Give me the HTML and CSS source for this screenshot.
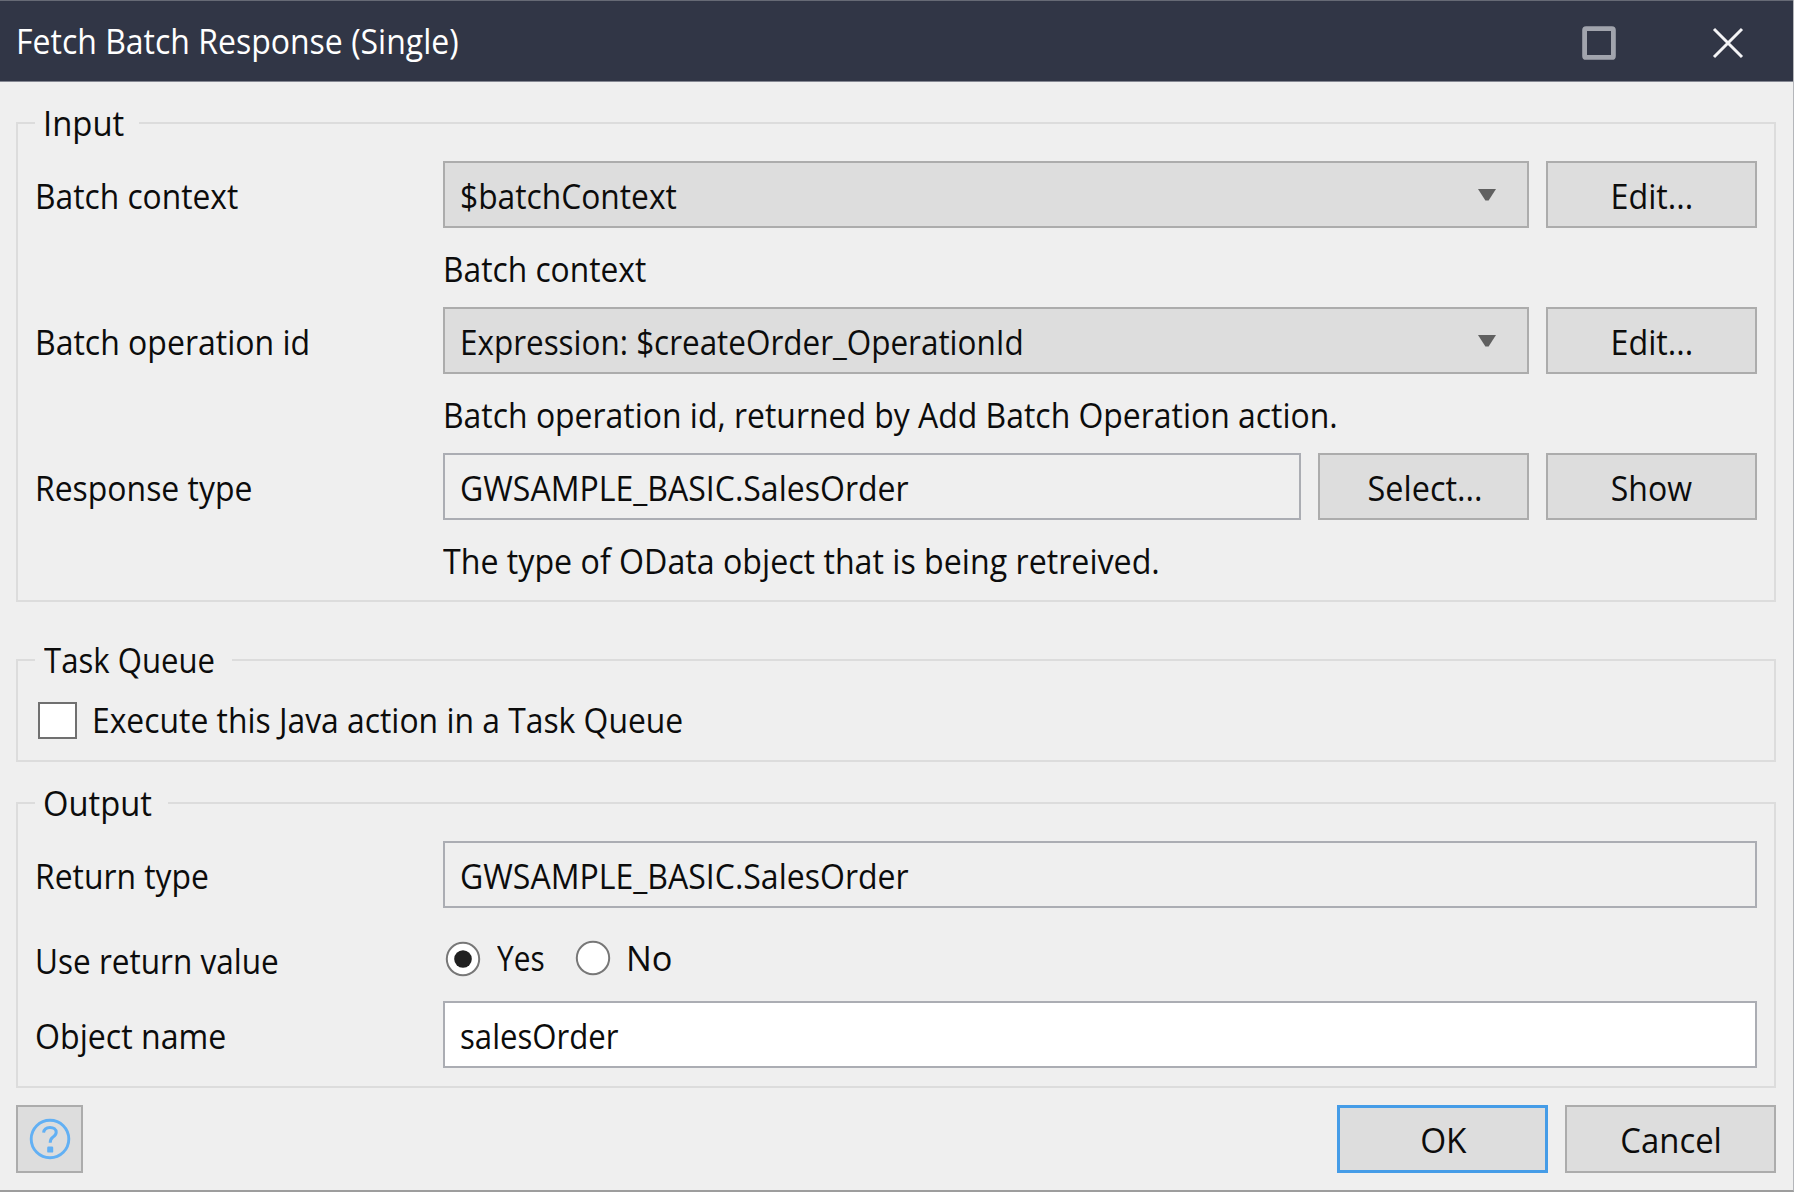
FILE: index.html
```html
<!DOCTYPE html>
<html lang="en">
<head>
<meta charset="utf-8">
<title>Fetch Batch Response (Single)</title>
<link rel="stylesheet" href="styles.css">
</head>
<body>
<div class="dialog">
  <header class="titlebar">
    <h1 class="t t-title">Fetch Batch Response (Single)</h1>
    <svg class="win-max" width="34" height="34" viewBox="0 0 34 34"><rect x="2.6" y="2.6" width="28.8" height="28.8" rx="1.5" fill="none" stroke="#a1a4ad" stroke-width="4.8"/></svg>
    <svg class="win-close" width="32" height="32" viewBox="0 0 32 32"><path d="M2 2 30 30M30 2 2 30" stroke="#f4f4f6" stroke-width="3" fill="none"/></svg>
  </header>

  <main class="content">
    <section class="group">
      <div class="legend legend-input"><span class="t t-input">Input</span></div>
      <div class="rows">
        <label class="label"><span class="t t-ctx">Batch context</span></label>
        <div class="controls">
          <div class="combo"><span class="t t-ctxval">$batchContext</span><svg class="arrow" width="18" height="12" viewBox="0 0 18 12"><path d="M0 0H18L10.6 11.5H7.4Z" fill="#606060"/></svg></div>
          <button class="btn"><span class="t t-edit">Edit...</span></button>
        </div>
        <p class="hint"><span class="t t-ctx">Batch context</span></p>

        <label class="label"><span class="t t-opid">Batch operation id</span></label>
        <div class="controls">
          <div class="combo"><span class="t t-expr">Expression: $createOrder_OperationId</span><svg class="arrow" width="18" height="12" viewBox="0 0 18 12"><path d="M0 0H18L10.6 11.5H7.4Z" fill="#606060"/></svg></div>
          <button class="btn"><span class="t t-edit">Edit...</span></button>
        </div>
        <p class="hint"><span class="t t-ophint">Batch operation id, returned by Add Batch Operation action.</span></p>

        <label class="label"><span class="t t-resp">Response type</span></label>
        <div class="controls">
          <div class="field"><span class="t t-gw">GWSAMPLE_BASIC.SalesOrder</span></div>
          <button class="btn btn-select"><span class="t t-select">Select...</span></button>
          <button class="btn"><span class="t">Show</span></button>
        </div>
        <p class="hint hint-type"><span class="t t-type">The type of OData object that is being retreived.</span></p>
      </div>
    </section>

    <section class="group group-queue">
      <div class="legend legend-queue"><span class="t t-queue">Task Queue</span></div>
      <label class="check-row"><i class="checkbox"></i><span class="t t-exec">Execute this Java action in a Task Queue</span></label>
    </section>

    <section class="group group-output">
      <div class="legend legend-output"><span class="t t-output">Output</span></div>
      <div class="rows">
        <label class="label"><span class="t t-ret">Return type</span></label>
        <div class="controls"><div class="field"><span class="t t-gw">GWSAMPLE_BASIC.SalesOrder</span></div></div>
        <label class="label label-use"><span class="t t-use">Use return value</span></label>
        <div class="radios">
          <label class="radio radio-yes"><svg width="36" height="36" viewBox="0 0 36 36"><circle cx="18" cy="18" r="16.2" fill="#fff" stroke="#777" stroke-width="2"/><circle cx="18" cy="18" r="8.8" fill="#202020"/></svg><span class="t t-yes">Yes</span></label>
          <label class="radio"><svg width="36" height="36" viewBox="0 0 36 36"><circle cx="18" cy="18" r="16.2" fill="#fff" stroke="#777" stroke-width="2"/></svg><span class="t t-no">No</span></label>
        </div>
        <label class="label"><span class="t t-obj">Object name</span></label>
        <div class="controls"><div class="field field-edit"><span class="t t-sales">salesOrder</span></div></div>
      </div>
    </section>
  </main>

  <footer class="footer">
    <button class="btn help"><svg width="42" height="42" viewBox="0 0 42 42" fill="none" stroke="#62b0f4"><circle cx="21" cy="21" r="18.8" stroke-width="2.9"/><path d="M14.6 14.6C15 11.2 17.4 9.4 21 9.4s6.2 1.8 6.2 4.8c0 2.6-1.6 3.7-3.4 5-1.8 1.3-2.6 2.2-2.6 5.6" stroke-width="3"/><rect x="18.2" y="28.6" width="6" height="6" rx="1.2" fill="#62b0f4" stroke="none"/></svg></button>
    <button class="btn primary"><span class="t t-ok">OK</span></button>
    <button class="btn btn-cancel"><span class="t t-cancel">Cancel</span></button>
  </footer>
</div>
</body>
</html>
```
FILE: styles.css
```css
* { box-sizing: border-box; }
html, body { margin: 0; height: 100%; }
body {
  font: 35px/48px "Open Sans", "Noto Sans", sans-serif;
  color: #0c0c0c;
  background: #efefef;
  overflow: hidden;
}
.dialog {
  width: 1794px;
  height: 1192px;
  display: flex;
  flex-direction: column;
  background: #efefef;
  border-right: 1px solid #b4b6ba;
  border-bottom: 2px solid #9d9d9d;
}

/* Slightly narrowed dialog text */
.t {
  --k: .914;
  display: inline-block;
  white-space: nowrap;
  transform: scaleX(var(--k));
  transform-origin: 0 50%;
}
.btn .t { transform-origin: 50% 50%; }
.t-title { --k: .914; }
.t-input { --k: .938; }
.t-ctx, .t-ctxval { --k: .907; }
.t-opid { --k: .914; }
.t-ophint { --k: .912; }
.t-expr { --k: .898; }
.t-gw { --k: .915; }
.t-type { --k: .919; }
.t-resp { --k: .912; }
.t-edit { --k: .922; }
.t-select { --k: .926; }
.t-queue { --k: .889; }
.t-exec { --k: .91; }
.t-output { --k: .935; }
.t-ret { --k: .91; }
.t-use { --k: .901; }
.t-yes { --k: .851; }
.t-no { --k: .98; }
.t-obj { --k: .918; }
.t-sales { --k: .89; }
.t-ok { --k: .953; }
.t-cancel { --k: .938; }

.titlebar {
  height: 82px;
  display: flex;
  align-items: center;
  padding: 0 49px 0 16px;
  background: #313646;
  border-top: 1px solid #666a75;
  border-bottom: 1px solid #848792;
  color: #fff;
}
.titlebar h1 { margin: 0 auto 0 0; font: inherit; }
.win-max { margin: 3px 96px 0 0; }
.win-close { margin-top: 3px; }

.content { padding: 40px 17px 0 16px; }
.group { border: 2px solid #dcdcdc; padding-bottom: 1px; }
.group-queue { margin-top: 57px; padding-bottom: 6px; }
.group-output { margin-top: 40px; padding-bottom: 18px; }
.legend {
  height: 48px;
  margin: -25px 0 14px 17px;
  padding-left: 8px;
  background: #efefef;
}
.legend-input { width: 104px; }
.legend-queue { width: 197px; margin-bottom: 0; padding-left: 9px; }
.legend-output { width: 133px; }

.rows {
  display: grid;
  grid-template-columns: 409px 1fr;
  padding: 0 17px 0 16px;
}
.label { display: flex; align-items: center; padding: 2px 0 0 1px; }
.controls { display: flex; gap: 17px; height: 67px; }
.combo, .field {
  flex: 1;
  display: flex;
  align-items: center;
  justify-content: space-between;
  padding: 2px 31px 0 15px;
  border: 2px solid #acacac;
  background: #dddddd;
}
.field { background: #efefef; border-color: #abadb3; padding-top: 3px; }
.field-edit { background: #fff; }
.arrow { margin-bottom: 2px; }
.btn {
  width: 211px;
  display: flex;
  align-items: center;
  justify-content: center;
  padding: 2px 0 0;
  font: inherit;
  color: inherit;
  background: #dddddd;
  border: 2px solid #acacac;
  border-radius: 0;
}
.btn-select { padding-left: 4px; }
.btn-cancel { padding-left: 2px; }
.hint {
  grid-column: 2;
  height: 79px;
  margin: 0;
  padding-top: 2px;
  display: flex;
  align-items: center;
}

.check-row { display: flex; align-items: center; height: 70px; padding: 2px 0 0 20px; }
.checkbox {
  width: 39px;
  height: 37px;
  margin: 0 15px 0 0;
  border: 2px solid #707070;
  background: #fff;
}

.label-use { padding-top: 12px; }
.radios { display: flex; height: 93px; padding: 6px 0 0 2px; }
.radio { display: flex; align-items: center; }
.radio svg { margin: 3px 15px 0 0; }
.radio:last-child svg { margin-top: 1px; }
.radio-yes { width: 130px; }
.radio-yes svg { margin-right: 16px; }

.footer {
  display: flex;
  height: 68px;
  margin-top: 17px;
  padding: 0 17px 0 16px;
  gap: 17px;
}
.help { width: 67px; margin-right: auto; padding: 0; }
.primary { border: 3px solid #459ce7; padding-left: 2px; }
```
